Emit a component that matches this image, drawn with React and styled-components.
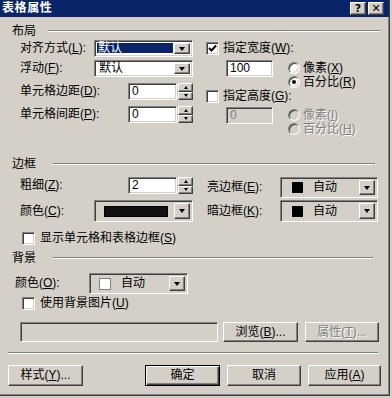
import React from "react";
import styled, { createGlobalStyle, css } from "styled-components";

const FACE = "#d4d0c8";
const SHADOW = "#808080";
const DARK = "#404040";
const HILITE = "#ffffff";
const NAVY = "#0a246a";

const GlobalStyle = createGlobalStyle`
  html, body { margin: 0; padding: 0; background: ${FACE}; }
  body {
    font-family: "Liberation Sans", "Noto Sans CJK SC", sans-serif;
    font-size: 12px;
    color: #000;
  }
  * { box-sizing: border-box; }
`;

const sunken = css`
  border: 1px solid;
  border-color: ${SHADOW} ${HILITE} ${HILITE} ${SHADOW};
  box-shadow: inset 1px 1px ${DARK}, inset -1px -1px ${FACE};
`;

const raised = css`
  background: ${FACE};
  border: 1px solid;
  border-color: ${HILITE} ${DARK} ${DARK} ${HILITE};
  box-shadow: inset -1px -1px ${SHADOW};
`;

const disabledText = css`
  color: ${SHADOW};
  text-shadow: 1px 1px ${HILITE};
`;

const Screen = styled.div`
  width: 392px;
  height: 398px;
  background: ${FACE};
  overflow: hidden;
`;

const Dialog = styled.div`
  width: 390px;
  height: 396px;
  display: flex;
  flex-direction: column;
  border-right: 1px solid ${DARK};
  border-bottom: 1px solid ${DARK};
  box-shadow: inset -1px -1px ${SHADOW};
`;

const TitleBar = styled.div`
  height: 17px;
  flex-shrink: 0;
  background: ${NAVY};
  display: flex;
  align-items: center;
  padding: 0 5px 0 2px;
`;

const Title = styled.div`
  flex: 1;
  color: #fff;
  font-weight: bold;
  font-size: 12px;
  line-height: 17px;
  letter-spacing: 0.6px;
`;

const CaptionButton = styled.div`
  ${raised};
  width: 16px;
  height: 13px;
  margin-left: ${(p) => p.$ml || 0}px;
  display: flex;
  align-items: center;
  justify-content: center;
  font: bold 11px "DejaVu Sans", sans-serif;
  line-height: 11px;
  color: #000;
`;

const Body = styled.div`
  flex: 1;
  display: flex;
  flex-direction: column;
`;

const SectionHead = styled.div`
  display: flex;
  align-items: center;
  height: 14px;
  line-height: 14px;
  margin: ${(p) => p.$mt}px ${(p) => p.$mr}px 0 12px;
`;

const Groove = styled.div`
  flex: 1;
  margin-left: ${(p) => p.$ml}px;
  border-top: 1px solid ${SHADOW};
  border-bottom: 1px solid ${HILITE};
`;

const Columns = styled.div`
  display: flex;
  align-items: flex-start;
  margin: ${(p) => p.$mt || 0}px 0 0 ${(p) => p.$ml || 0}px;
`;

const Column = styled.div`
  display: flex;
  flex-direction: column;
  width: ${(p) => (p.$w ? `${p.$w}px` : "auto")};
  margin-left: ${(p) => p.$ml || 0}px;
`;

const Row = styled.div`
  display: flex;
  align-items: ${(p) => p.$align || "center"};
  margin-top: ${(p) => p.$mt || 0}px;
  margin-left: ${(p) => p.$ml || 0}px;
  height: ${(p) => (p.$h ? `${p.$h}px` : "auto")};
`;

const Label = styled.span`
  width: ${(p) => (p.$w ? `${p.$w}px` : "auto")};
  margin-left: ${(p) => p.$ml || 0}px;
  flex-shrink: 0;
  white-space: nowrap;
  line-height: 13px;
  height: 13px;
  ${(p) => p.$disabled && disabledText};
`;

const Key = styled.span`
  text-decoration: underline;
  text-underline-offset: 1px;
`;

const ComboFrame = styled.div`
  ${sunken};
  width: ${(p) => p.$w}px;
  height: ${(p) => p.$h}px;
  background: ${(p) => p.$bg || "#fff"};
  padding: 2px;
  display: flex;
  align-items: stretch;
  flex-shrink: 0;
`;

const ComboValue = styled.div`
  flex: 1;
  display: flex;
  align-items: center;
  line-height: 13px;
  padding: ${(p) => (p.$selected ? "0 1px 1px 0" : "0 0 0 2px")};
`;

const Highlight = styled.span`
  flex: 1;
  align-self: stretch;
  background: ${NAVY};
  color: #fff;
  display: flex;
  align-items: center;
  padding-left: 1px;
  font-size: 12px;
  line-height: 12px;
`;

const Swatch = styled.span`
  width: ${(p) => p.$w}px;
  height: ${(p) => p.$h}px;
  background: ${(p) => p.$color};
  border: 1px solid ${(p) => (p.$color === "#fff" ? SHADOW : "#000")};
  margin-left: ${(p) => p.$ml || 0}px;
  flex-shrink: 0;
`;

const SwatchText = styled.span`
  margin-left: ${(p) => p.$ml}px;
  line-height: 13px;
`;

const DropButton = styled.div`
  ${raised};
  width: 16px;
  flex-shrink: 0;
  display: flex;
  align-items: center;
  justify-content: center;
`;

const Arrow = styled.span`
  width: 0;
  height: 0;
  border-left: 3.5px solid transparent;
  border-right: 3.5px solid transparent;
  border-top: 4px solid #000;
`;

const TextBox = styled.div`
  ${sunken};
  width: ${(p) => p.$w}px;
  height: ${(p) => p.$h || 17}px;
  margin-left: ${(p) => p.$ml || 0}px;
  background: ${(p) => (p.$disabled ? FACE : "#fff")};
  color: ${(p) => (p.$disabled ? SHADOW : "#000")};
  padding: 0 3px;
  line-height: ${(p) => (p.$h || 17) - 2}px;
  font-size: 12px;
  flex-shrink: 0;
`;

const SpinBox = styled.div`
  width: 15px;
  height: 17px;
  margin-left: 1px;
  display: flex;
  flex-direction: column;
  flex-shrink: 0;
`;

const SpinButton = styled.div`
  ${raised};
  flex: 1;
  display: flex;
  align-items: center;
  justify-content: center;
`;

const SpinArrow = styled.span`
  width: 0;
  height: 0;
  border-left: 2.5px solid transparent;
  border-right: 2.5px solid transparent;
  ${(p) => (p.$up ? `border-bottom: 3px solid #000;` : `border-top: 3px solid #000;`)}
`;

const CheckBoxBox = styled.span`
  ${sunken};
  width: 13px;
  height: 13px;
  background: #fff;
  flex-shrink: 0;
  display: flex;
  align-items: center;
  justify-content: center;
`;

const RadioCircle = styled.span`
  width: 12px;
  height: 12px;
  border-radius: 50%;
  flex-shrink: 0;
  border: 1px solid;
  border-color: ${SHADOW} ${HILITE} ${HILITE} ${SHADOW};
  box-shadow: inset 1px 1px ${DARK}, inset -1px -1px ${FACE};
  background: ${(p) => (p.$disabled ? FACE : "#fff")};
  display: flex;
  align-items: center;
  justify-content: center;
`;

const Dot = styled.span`
  width: 4px;
  height: 4px;
  border-radius: 50%;
  background: #000;
`;

const Separator = styled.div`
  margin: ${(p) => p.$mt}px 0 0 8px;
  width: 370px;
  border-top: 1px solid ${SHADOW};
  border-bottom: 1px solid ${HILITE};
`;

const Button = styled.div`
  ${raised};
  width: ${(p) => p.$w}px;
  height: ${(p) => p.$h || 21}px;
  margin-left: ${(p) => p.$ml || 0}px;
  display: flex;
  align-items: center;
  justify-content: center;
  line-height: 13px;
  white-space: nowrap;
  flex-shrink: 0;
  ${(p) =>
    p.$default &&
    css`
      border: 1px solid #000;
      box-shadow: inset 1px 1px ${HILITE}, inset -1px -1px ${DARK},
        inset -2px -2px ${SHADOW};
    `}
  ${(p) => p.$disabled && disabledText};
`;

const Mn = ({ text, k, tail = "" }) => (
  <>
    {text}(<Key>{k}</Key>){tail}
  </>
);

const Combo = ({ w, h, bg, children }) => (
  <ComboFrame $w={w} $h={h} $bg={bg}>
    {children}
    <DropButton>
      <Arrow />
    </DropButton>
  </ComboFrame>
);

const Spinner = () => (
  <SpinBox>
    <SpinButton>
      <SpinArrow $up />
    </SpinButton>
    <SpinButton>
      <SpinArrow />
    </SpinButton>
  </SpinBox>
);

const Check = ({ checked }) => (
  <CheckBoxBox>
    {checked && (
      <svg width="9" height="9" viewBox="0 0 9 9">
        <polyline
          points="1,4 3.5,6.5 8,1.5"
          fill="none"
          stroke="#000"
          strokeWidth="1.9"
        />
      </svg>
    )}
  </CheckBoxBox>
);

const Radio = ({ checked, disabled, children, mt }) => (
  <Row $h={14} $mt={mt}>
    <RadioCircle $disabled={disabled}>{checked && <Dot />}</RadioCircle>
    <Label $ml={3} $disabled={disabled}>
      {children}
    </Label>
  </Row>
);

export default function App() {
  return (
    <Screen>
      <GlobalStyle />
      <Dialog>
        <TitleBar>
          <Title>表格属性</Title>
          <CaptionButton>?</CaptionButton>
          <CaptionButton $ml={2}>✕</CaptionButton>
        </TitleBar>
        <Body>
          <SectionHead $mt={7} $mr={9}>
            布局
            <Groove $ml={12} />
          </SectionHead>

          <Columns $mt={2} $ml={20}>
            <Column $w={173}>
              <Row $h={17}>
                <Label $w={74}>
                  <Mn text="对齐方式" k="L" tail=":" />
                </Label>
                <Combo w={99} h={17}>
                  <ComboValue $selected>
                    <Highlight>默认</Highlight>
                  </ComboValue>
                </Combo>
              </Row>
              <Row $h={17} $mt={3}>
                <Label $w={74}>
                  <Mn text="浮动" k="F" tail=":" />
                </Label>
                <Combo w={99} h={17}>
                  <ComboValue>默认</ComboValue>
                </Combo>
              </Row>
              <Row $h={17} $mt={6}>
                <Label $w={108}>
                  <Mn text="单元格边距" k="D" tail=":" />
                </Label>
                <TextBox $w={49}>0</TextBox>
                <Spinner />
              </Row>
              <Row $h={17} $mt={6}>
                <Label $w={108}>
                  <Mn text="单元格间距" k="P" tail=":" />
                </Label>
                <TextBox $w={49}>0</TextBox>
                <Spinner />
              </Row>
            </Column>

            <Column $ml={13}>
              <Row $h={17}>
                <Check checked />
                <Label $ml={4}>
                  <Mn text="指定宽度" k="W" tail=":" />
                </Label>
              </Row>
              <Row $align="flex-start" $mt={3}>
                <TextBox $w={47} $ml={20}>
                  100
                </TextBox>
                <Column $ml={15}>
                  <Radio mt={1}>
                    <Mn text="像素" k="X" />
                  </Radio>
                  <Radio checked>
                    <Mn text="百分比" k="R" />
                  </Radio>
                </Column>
              </Row>
              <Row $h={14}>
                <Check />
                <Label $ml={4}>
                  <Mn text="指定高度" k="G" tail=":" />
                </Label>
              </Row>
              <Row $align="flex-start" $mt={4}>
                <TextBox $w={47} $ml={20} $disabled>
                  0
                </TextBox>
                <Column $ml={15}>
                  <Radio mt={1} disabled>
                    <Mn text="像素" k="I" />
                  </Radio>
                  <Radio disabled>
                    <Mn text="百分比" k="H" />
                  </Radio>
                </Column>
              </Row>
            </Column>
          </Columns>

          <SectionHead $mt={21} $mr={14}>
            边框
            <Groove $ml={17} />
          </SectionHead>

          <Row $h={21} $mt={6} $ml={20} $align="flex-start">
            <Row $h={17}>
              <Label $w={108}>
                <Mn text="粗细" k="Z" tail=":" />
              </Label>
              <TextBox $w={49}>2</TextBox>
              <Spinner />
            </Row>
            <Row $h={21} $ml={14}>
              <Label $w={73}>
                <Mn text="亮边框" k="E" tail=":" />
              </Label>
              <Combo w={98} h={21} bg={FACE}>
                <ComboValue>
                  <Swatch $w={11} $h={11} $color="#000" $ml={7} />
                  <SwatchText $ml={10}>自动</SwatchText>
                </ComboValue>
              </Combo>
            </Row>
          </Row>

          <Row $h={22} $mt={2} $ml={20}>
            <Label $w={74}>
              <Mn text="颜色" k="C" tail=":" />
            </Label>
            <Combo w={99} h={22} bg={FACE}>
              <ComboValue>
                <Swatch $w={64} $h={11} $color="#111" $ml={5} />
              </ComboValue>
            </Combo>
            <Label $w={73} $ml={14}>
              <Mn text="暗边框" k="K" tail=":" />
            </Label>
            <Combo w={98} h={22} bg={FACE}>
              <ComboValue>
                <Swatch $w={11} $h={11} $color="#000" $ml={7} />
                <SwatchText $ml={10}>自动</SwatchText>
              </ComboValue>
            </Combo>
          </Row>

          <Row $h={13} $mt={10} $ml={22}>
            <Check />
            <Label $ml={5}>
              <Mn text="显示单元格和表格边框" k="S" />
            </Label>
          </Row>

          <SectionHead $mt={6} $mr={16}>
            背景
            <Groove $ml={17} />
          </SectionHead>

          <Row $h={21} $mt={8} $ml={15}>
            <Label $w={74}>
              <Mn text="颜色" k="O" tail=":" />
            </Label>
            <Combo w={99} h={21} bg={FACE}>
              <ComboValue>
                <Swatch $w={12} $h={12} $color="#fff" $ml={5} />
                <SwatchText $ml={10}>自动</SwatchText>
              </ComboValue>
            </Combo>
          </Row>

          <Row $h={13} $mt={3} $ml={22}>
            <Check />
            <Label $ml={5}>
              <Mn text="使用背景图片" k="U" />
            </Label>
          </Row>

          <Row $h={20} $mt={12} $ml={20}>
            <TextBox $w={198} $h={20} $disabled />
            <Button $w={75} $h={20} $ml={5}>
              <Mn text="浏览" k="B" tail="..." />
            </Button>
            <Button $w={74} $h={20} $ml={7} $disabled>
              <Mn text="属性" k="T" tail="..." />
            </Button>
          </Row>

          <Separator $mt={10} />

          <Row $h={21} $mt={11} $ml={8}>
            <Button $w={75}>
              <Mn text="样式" k="Y" tail="..." />
            </Button>
            <Button $w={75} $ml={62} $default>
              确定
            </Button>
            <Button $w={74} $ml={7}>
              取消
            </Button>
            <Button $w={73} $ml={7}>
              <Mn text="应用" k="A" />
            </Button>
          </Row>
        </Body>
      </Dialog>
    </Screen>
  );
}
